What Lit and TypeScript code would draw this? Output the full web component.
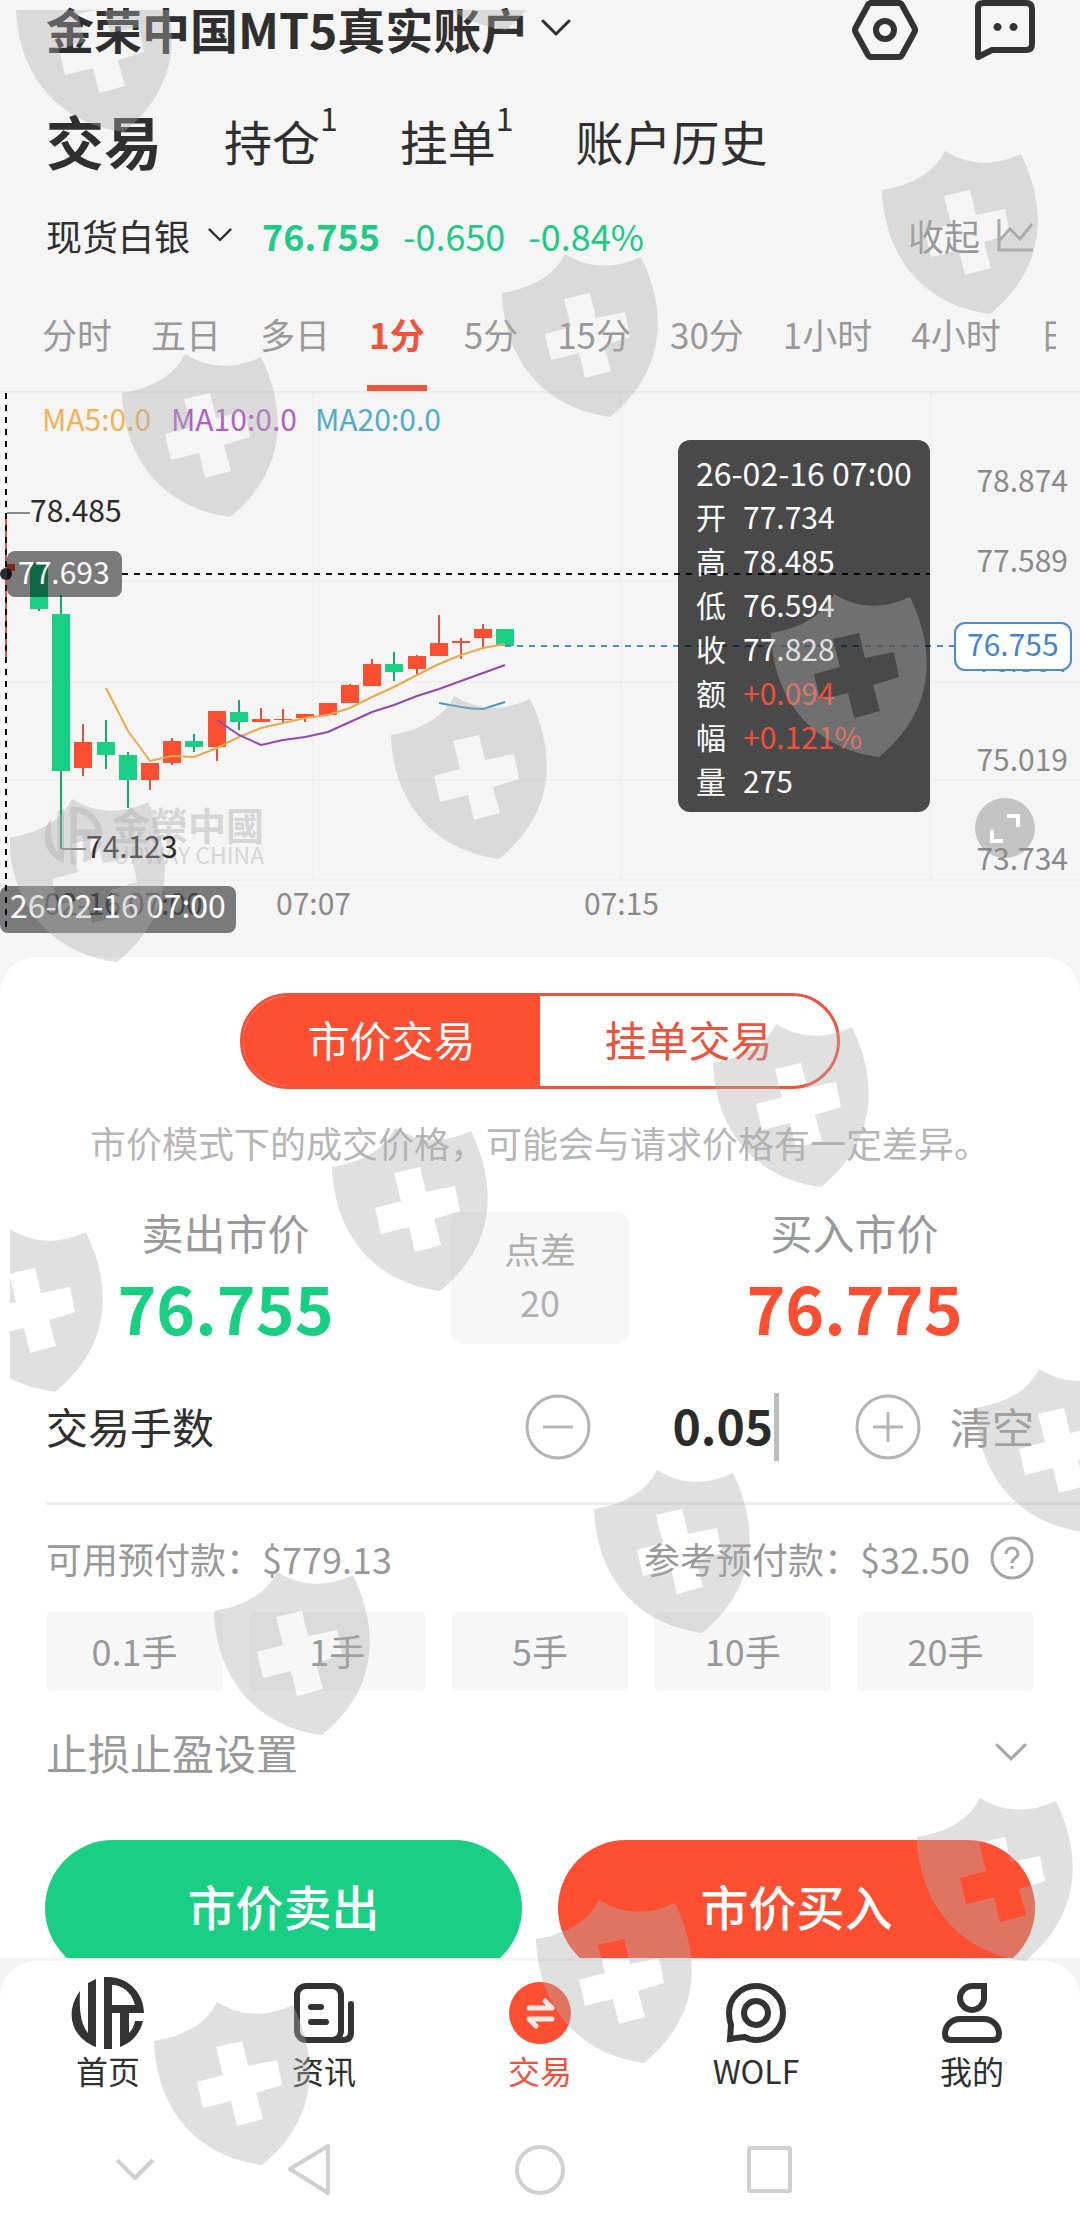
import { LitElement, html, svg, css } from "lit";
import { customElement, state } from "lit/decorators.js";

type Candle = [x: number, up: boolean, top: number, bottom: number, high: number, low: number];

const CANDLES: Candle[] = [
  [39, false, 563, 609, 563, 611],
  [61, false, 614, 771, 595, 849],
  [83, true, 742, 768, 724, 776],
  [106, false, 742, 755, 720, 769],
  [128, false, 755, 780, 752, 808],
  [150, true, 763, 780, 763, 790],
  [172, true, 741, 763, 738, 765],
  [194, false, 741, 747, 734, 752],
  [217, true, 711, 747, 711, 761],
  [239, false, 712, 722, 700, 730],
  [261, true, 719, 722, 708, 722],
  [283, true, 719, 720, 709, 723],
  [305, true, 714, 718, 714, 722],
  [328, true, 703, 715, 703, 715],
  [350, true, 685, 703, 684, 703],
  [372, true, 664, 686, 659, 686],
  [394, false, 664, 672, 652, 681],
  [417, true, 656, 669, 655, 675],
  [439, true, 643, 656, 615, 656],
  [461, true, 641, 643, 638, 659],
  [483, true, 629, 638, 624, 648],
  [505, false, 629, 646, 629, 646],
];

const MA5 =
  "106,688 128,731 150,761 172,756 194,757 217,748 239,737 261,728 283,723 305,718 328,715 350,708 372,697 394,687 417,675 439,664 461,655 483,648 505,644";
const MA10 =
  "217,720 239,735 261,745 283,740 305,737 328,732 350,722 372,712 394,705 417,696 439,689 461,681 483,673 505,665";

const SHIELDS: [number, number][] = [
  [16, -32], [398, -134], [882, 150], [502, 253], [122, 353], [771, 593], [391, 695], [9, 798],
  [713, 1023], [332, 1127], [-53, 1228], [976, 1368], [594, 1469], [214, 1571], [917, 1797],
  [536, 1899], [154, 2001],
];

const SHIELD_PATH =
  "M0 40Q48 32 63 1Q98 23 139 4C167 62 162 120 108 164C40 155 2 105 0 40Z" +
  "M62 46L69 74L43 81L49 107L77 100L83 125L109 118L102 92L128 84L123 59L94 65L88 40Z";

const BRAND_PATH =
  "M14 20C-1 40 4 66 30 76V8L22 12V62C15 54 13 40 14 20Z" +
  "M38 6H42C63 6 78 23 78 42H46V78H38ZM46 14V34H69C66 22 57 14 46 14Z" +
  "M54 41H63V62Q68 57 69 50H77C74 63 65 72 54 76Z";

const PERIODS = ["分时", "五日", "多日", "1分", "5分", "15分", "30分", "1小时", "4小时", "日"];

const OHLC: [string, string, boolean][] = [
  ["开", "77.734", false],
  ["高", "78.485", false],
  ["低", "76.594", false],
  ["收", "77.828", false],
  ["额", "+0.094", true],
  ["幅", "+0.121%", true],
  ["量", "275", false],
];

const chevron = (cls: string) => html`
  <svg class="chev ${cls}" viewBox="0 0 30 18" aria-hidden="true">
    <path d="M2 2L15 15L28 2" fill="none" stroke="currentColor" stroke-width="3" stroke-linecap="round" stroke-linejoin="round" />
  </svg>
`;

@customElement("price-chart")
class PriceChart extends LitElement {
  static styles = css`
    :host {
      display: block;
      position: relative;
      font-family: "Noto Sans CJK SC", sans-serif;
    }
    .plot {
      display: block;
      width: 100%;
      font-size: 30px;
    }
    .grid { stroke: #f0f0f0; stroke-width: 2; fill: none; }
    .edge { stroke: #ebebeb; stroke-width: 3; }
    .up { fill: #ff4f33; stroke: #e0513f; }
    .down { fill: #18cf84; stroke: #16a86e; }
    .wick { stroke-width: 2; }
    .body { stroke: none; }
    .line { fill: none; stroke-width: 2; }
    .axis { fill: #8a8a8a; }
    .mark { fill: #2b2b2b; }
    .tag { fill: rgba(0, 0, 0, 0.5); }
    .tag-text { fill: #fff; }
    .brand { fill: #d6d6d6; }
    .brand-name { font: 700 38px "Noto Sans CJK TC", sans-serif; }
    .brand-sub { font: 400 23px "Noto Sans CJK SC", sans-serif; }
    .tip {
      position: absolute;
      top: 49px;
      right: 150px;
      box-sizing: border-box;
      width: 252px;
      padding: 10px 18px;
      border-radius: 12px;
      background: rgba(0, 0, 0, 0.7);
      color: #fff;
      font-size: 30px;
      line-height: 44px;
      white-space: nowrap;
    }
    .tip-date { font-size: 32px; }
    .tip-list { margin: 0; }
    .tip-row { display: flex; gap: 17px; }
    .tip-value { margin: 0; }
    .rise { color: #f0503c; }
  `;

  render() {
    return html`
      <svg class="plot" viewBox="0 391 1080 566" role="img" aria-label="现货白银 1分">
        <path class="edge" d="M0 392H1080" />
        <path class="grid" d="M0 581H931M0 682H1080M0 780H1080M0 880H1080M313 393V880M621 393V880M931 393V880" />
        <g class="brand">
          <path transform="translate(40 802) scale(0.8)" d=${BRAND_PATH} />
          <text class="brand-name" x="112" y="840">金榮中國</text>
          <text class="brand-sub" x="113" y="864">UPWAY CHINA</text>
        </g>
        <path d="M6 513V662" stroke="#e0513f" stroke-width="2" />
        <rect x="6" y="564" width="9" height="7" fill="#ff4f33" />
        ${CANDLES.map(
          ([x, up, top, bottom, high, low]) => svg`
            <g class=${up ? "up" : "down"}>
              <path class="wick" d="M${x} ${high}V${low}" />
              <rect class="body" x=${x - 9} y=${top} width="18" height=${bottom - top} />
            </g>`
        )}
        <polyline class="line" points=${MA5} stroke="#e8aa4c" />
        <polyline class="line" points=${MA10} stroke="#9546b4" />
        <path class="line" d="M439 703L461 707Q472 709 483 709L505 702" stroke="#3f9cbd" />
        <path d="M505 646H954" stroke="#4a90d0" stroke-width="2" stroke-dasharray="6 6" />
        <g class="axis">
          <text x="42" y="431" fill="#f0b35a">MA5:0.0</text>
          <text x="171" y="431" fill="#ae60c8">MA10:0.0</text>
          <text x="315" y="431" fill="#52acc8">MA20:0.0</text>
          <circle cx="1005" cy="828" r="30" fill="#c4c4c4" />
          <path d="M1007 816H1018V827M992 830V841H1003" fill="none" stroke="#fff" stroke-width="4" />
          <g text-anchor="end">
            <text x="1068" y="492">78.874</text>
            <text x="1068" y="572">77.589</text>
            <text x="1068" y="672">76.304</text>
            <text x="1068" y="771">75.019</text>
            <text x="1068" y="870">73.734</text>
          </g>
          <text x="44" y="915">02-16 07:00</text>
          <text x="276" y="915">07:07</text>
          <text x="584" y="915">07:15</text>
        </g>
        <path d="M7 513H30M62 849H86" stroke="#8a8a8a" stroke-width="2" />
        <text class="mark" x="30" y="522">78.485</text>
        <text class="mark" x="86" y="858">74.123</text>
        <path d="M6 393V930M122 574H930" stroke="#111" stroke-width="2" stroke-dasharray="6 6" fill="none" />
        <circle cx="6" cy="574" r="6" fill="#2b2b33" />
        <rect class="tag" x="7" y="551" width="115" height="46" rx="8" />
        <text class="tag-text" x="18" y="584">77.693</text>
        <rect class="tag" x="0" y="886" width="236" height="47" rx="8" />
        <text class="tag-text" x="10" y="918" font-size="32">26-02-16 07:00</text>
        <rect x="955" y="623" width="116" height="47" rx="10" fill="#fff" stroke="#4a8ccc" stroke-width="2" />
        <text x="967" y="656" fill="#3f84cc">76.755</text>
      </svg>
      <div class="tip">
        <div class="tip-date">26-02-16 07:00</div>
        <dl class="tip-list">
          ${OHLC.map(
            ([name, value, rise]) => html`
              <div class="tip-row">
                <dt>${name}</dt>
                <dd class="tip-value ${rise ? "rise" : ""}">${value}</dd>
              </div>`
          )}
        </dl>
      </div>
    `;
  }
}

@customElement("order-sheet")
class OrderSheet extends LitElement {
  static styles = css`
    :host {
      display: block;
      padding: 36px 46px 0;
      border-radius: 36px 36px 0 0;
      background: #fff;
      color: #999;
      font-size: 36px;
    }
    button, input {
      margin: 0;
      padding: 0;
      border: 0;
      background: none;
      color: inherit;
      font: inherit;
    }
    .modes {
      box-sizing: border-box;
      display: grid;
      grid-template-columns: 1fr 1fr;
      width: 600px;
      max-width: 100%;
      height: 96px;
      margin: 0 auto;
      overflow: hidden;
      border: 3px solid #f0523c;
      border-radius: 48px;
    }
    .mode { padding-bottom: 6px; color: #ee523d; font-size: 42px; }
    .mode.on { background: #ff4f33; color: #fff; }
    .hint {
      margin: 26px 0 43px;
      color: #b6b6b6;
      line-height: 54px;
      text-align: center;
      white-space: nowrap;
    }
    .quotes {
      display: grid;
      grid-template-columns: 1fr 178px 1fr;
      gap: 46px;
      height: 132px;
      text-align: center;
    }
    .side { font-size: 42px; line-height: 40px; }
    .price { font-size: 66px; font-weight: 700; line-height: 68px; margin-top: 20px; }
    .sell { color: #18cf84; }
    .buy { color: #ff4f33; }
    .spread {
      display: flex;
      flex-direction: column;
      justify-content: center;
      border-radius: 12px;
      background: #f7f7f7;
      color: #b0b0b0;
      line-height: 53px;
      padding-bottom: 6px;
    }
    .lots {
      display: flex;
      align-items: center;
      height: 68px;
      margin-top: 49px;
      font-size: 42px;
    }
    .lots-label { flex: 1; padding-bottom: 4px; color: #2f2f2f; }
    .step { display: flex; }
    .step-icon { width: 66px; height: 66px; }
    .field {
      display: flex;
      align-items: center;
      justify-content: center;
      box-sizing: border-box;
      width: 264px;
      padding-left: 6px;
      gap: 2px;
    }
    .amount {
      width: 100px;
      padding-bottom: 6px;
      color: #2b2b2b;
      font-size: 48px;
      font-weight: 700;
      line-height: 62px;
      text-align: right;
      outline: none;
    }
    .caret { width: 5px; height: 68px; background: #bcbcbc; }
    .clear { margin-left: 29px; padding-bottom: 4px; }
    .rule { height: 3px; margin: 41px -46px 0 0; background: #eee; }
    .margins {
      display: flex;
      align-items: center;
      justify-content: space-between;
      margin-top: 26px;
      line-height: 54px;
      white-space: nowrap;
    }
    .need { display: flex; align-items: center; gap: 20px; }
    .help { display: flex; }
    .help-icon { width: 44px; height: 44px; }
    .chips {
      display: grid;
      grid-template-columns: repeat(5, 1fr);
      gap: 26px;
      margin-top: 27px;
    }
    .chip { height: 79px; padding-bottom: 3px; border-radius: 6px; background: #f7f7f7; }
    .stops {
      display: flex;
      align-items: center;
      justify-content: space-between;
      width: 100%;
      margin-top: 31px;
      font-size: 42px;
      line-height: 60px;
    }
    .chev { width: 32px; margin: 2px 7px 0 0; color: #a8a8a8; }
    .actions { display: grid; grid-template-columns: 1fr 1fr; gap: 36px; margin: 58px -1px 0; }
    .action { height: 136px; padding-bottom: 6px; border-radius: 68px; color: #fff; font-size: 48px; font-weight: 500; }
    .action.ask { background: #18cf84; }
    .action.bid { background: #ff4f33; }
  `;

  @state() private lots = "0.05";

  render() {
    return html`
      <div class="modes">
        <button class="mode on">市价交易</button>
        <button class="mode">挂单交易</button>
      </div>
      <p class="hint">市价模式下的成交价格，可能会与请求价格有一定差异。</p>
      <div class="quotes">
        <div>
          <div class="side">卖出市价</div>
          <div class="price sell">76.755</div>
        </div>
        <div class="spread"><span>点差</span><span>20</span></div>
        <div>
          <div class="side">买入市价</div>
          <div class="price buy">76.775</div>
        </div>
      </div>
      <div class="lots">
        <label class="lots-label" for="lots">交易手数</label>
        <button class="step" aria-label="减少">
          <svg class="step-icon" viewBox="0 0 66 66" fill="none" stroke="#b4b4b4" stroke-width="3">
            <circle cx="33" cy="33" r="31" /><path d="M18 33H48" />
          </svg>
        </button>
        <div class="field">
          <input class="amount" id="lots" inputmode="decimal" .value=${this.lots}
            @input=${(e: Event) => (this.lots = (e.target as HTMLInputElement).value)} />
          <span class="caret"></span>
        </div>
        <button class="step" aria-label="增加">
          <svg class="step-icon" viewBox="0 0 66 66" fill="none" stroke="#b4b4b4" stroke-width="3">
            <circle cx="33" cy="33" r="31" /><path d="M18 33H48M33 18V48" />
          </svg>
        </button>
        <button class="clear" @click=${() => (this.lots = "")}>清空</button>
      </div>
      <div class="rule"></div>
      <div class="margins">
        <span>可用预付款：$779.13</span>
        <span class="need">
          参考预付款：$32.50
          <button class="help" aria-label="说明">
            <svg class="help-icon" viewBox="0 0 44 44" fill="none" stroke="#a6a6a6" stroke-width="3">
              <circle cx="22" cy="22" r="20" />
              <path d="M16 18C16 10 28 10 28 18C28 22 22 22 22 27M22 30V33" />
            </svg>
          </button>
        </span>
      </div>
      <div class="chips">
        ${["0.1", "1", "5", "10", "20"].map((n) => html`<button class="chip">${n}手</button>`)}
      </div>
      <button class="stops"><span>止损止盈设置</span>${chevron("")}</button>
      <div class="actions">
        <button class="action ask">市价卖出</button>
        <button class="action bid">市价买入</button>
      </div>
    `;
  }
}

const NAV = [
  {
    label: "首页",
    icon: svg`<path d=${BRAND_PATH} fill="#333" />`,
  },
  {
    label: "资讯",
    icon: svg`<g fill="none" stroke="#333" stroke-width="6" stroke-linecap="round">
      <rect x="15" y="15" width="44" height="54" rx="9" />
      <path d="M69 33V61Q69 69 61 69H52M29 36H39M29 51H44" /></g>`,
  },
  {
    label: "交易",
    icon: svg`<circle cx="42" cy="42" r="31" fill="#ff4f33" />
      <path d="M31 37H54L47 30M54 48H31L38 55" fill="none" stroke="#ffe9e6" stroke-width="5" stroke-linecap="round" stroke-linejoin="round" />`,
  },
  {
    label: "WOLF",
    icon: svg`<g fill="none" stroke="#333" stroke-width="6">
      <path d="M16 68L17 54Q15 48 15 42A27 27 0 1 1 42 69Q36 69 31 66Q28 66 16 68Z" />
      <circle cx="42" cy="42" r="12" /></g>`,
  },
  {
    label: "我的",
    icon: svg`<g fill="none" stroke="#333" stroke-width="6">
      <path d="M42 15H54V27A12 12 0 1 1 42 15Z" />
      <path d="M30 48H54A15 15 0 0 1 69 63Q69 69 63 69H21Q15 69 15 63A15 15 0 0 1 30 48Z" /></g>`,
  },
];

@customElement("app-root")
class AppRoot extends LitElement {
  static styles = css`
    :host {
      position: relative;
      display: flex;
      flex-direction: column;
      height: 100vh;
      overflow: hidden;
      background: #f5f5f5;
      color: #2f2f2f;
      font-family: "Noto Sans CJK SC", sans-serif;
      font-size: 36px;
    }
    button {
      margin: 0;
      padding: 0;
      border: 0;
      background: none;
      color: inherit;
      font: inherit;
      white-space: nowrap;
    }
    a { color: inherit; text-decoration: none; }
    .scroll { flex: 1; min-height: 0; overflow: hidden; }
    .head {
      display: flex;
      align-items: center;
      height: 60px;
      padding: 0 42px 0 46px;
    }
    .account {
      display: flex;
      align-items: center;
      gap: 12px;
      margin-right: auto;
      padding-bottom: 4px;
      font-size: 48px;
      font-weight: 700;
      line-height: 56px;
    }
    .chev { display: block; width: 30px; }
    .chev.small { width: 24px; }
    .head-icon { display: block; width: 66px; height: 60px; }
    .chat { margin-left: 54px; }
    .tabs {
      display: flex;
      align-items: center;
      gap: 62px;
      height: 80px;
      margin-top: 40px;
      padding: 0 46px;
      font-size: 48px;
    }
    .tab { display: flex; }
    .tab.on { font-size: 58px; font-weight: 700; }
    .badge { margin-top: -8px; font-size: 32px; line-height: 40px; }
    .symbol {
      display: flex;
      align-items: center;
      height: 54px;
      margin-top: 28px;
      padding: 0 46px;
      line-height: 54px;
    }
    .name { display: flex; align-items: center; gap: 18px; margin-right: 30px; }
    .figures { display: flex; gap: 23px; color: #20c986; }
    .last { font-weight: 700; }
    .fold { display: flex; align-items: center; gap: 16px; margin-left: auto; color: #999; }
    .fold-icon { width: 38px; height: 36px; }
    .periods {
      display: flex;
      gap: 39px;
      height: 84px;
      margin: 45px 24px 0 0;
      padding-left: 42px;
      overflow: hidden;
      color: #999;
      font-size: 35px;
      line-height: 54px;
    }
    .period { position: relative; flex: none; display: flex; }
    .period.on { color: #f0523c; font-weight: 700; }
    .period.on::after {
      content: "";
      position: absolute;
      left: 50%;
      bottom: 0;
      width: 60px;
      height: 6px;
      margin-left: -30px;
      background: #f0523c;
    }
    .foot { background: #f3f3f3; padding-top: 3px; }
    .foot-panel { border-radius: 36px 36px 0 0; background: #fff; }
    .nav { display: grid; grid-template-columns: repeat(5, 1fr); padding-top: 10px; }
    .nav-item {
      display: flex;
      flex-direction: column;
      align-items: center;
      font-size: 32px;
      line-height: 30px;
    }
    .nav-item.on { color: #ee523d; }
    .nav-icon { width: 84px; height: 84px; }
    .system { display: block; width: 100%; height: 144px; }
    .marks { position: absolute; inset: 10px 0 0 10px; overflow: hidden; pointer-events: none; }
    .marks-art { display: block; fill: #b0b0b0; fill-opacity: 0.39; }
  `;

  @state() private period = "1分";

  render() {
    return html`
      <main class="scroll">
        <header class="head">
          <button class="account">金荣中国MT5真实账户${chevron("")}</button>
          <button aria-label="设置">
            <svg class="head-icon" viewBox="0 0 66 60" fill="none" stroke="#333" stroke-width="6" stroke-linejoin="round">
              <path d="M19 3H47Q49 3 50 5L62 27Q64 30 62 33L50 55Q49 57 47 57H19Q17 57 16 55L4 33Q2 30 4 27L16 5Q17 3 19 3Z" />
              <circle cx="33" cy="30" r="9" />
            </svg>
          </button>
          <button class="chat" aria-label="消息">
            <svg class="head-icon" viewBox="0 0 66 60" fill="none" stroke="#333" stroke-width="6" stroke-linejoin="round">
              <path d="M10 3H54Q60 3 60 9V44Q60 50 54 50H20L6 57V8Q6 3 11 3" />
              <path d="M25 23a4 4 0 1 0 1 0M41 23a4 4 0 1 0 1 0" fill="#333" stroke="none" />
            </svg>
          </button>
        </header>
        <nav class="tabs">
          <button class="tab on">交易</button>
          <button class="tab">持仓<span class="badge">1</span></button>
          <button class="tab">挂单<span class="badge">1</span></button>
          <button class="tab">账户历史</button>
        </nav>
        <div class="symbol">
          <button class="name">现货白银${chevron("small")}</button>
          <div class="figures">
            <span class="last">76.755</span><span>-0.650</span><span>-0.84%</span>
          </div>
          <button class="fold">
            收起
            <svg class="fold-icon" viewBox="0 0 38 36" fill="none" stroke="#aaa" stroke-width="3">
              <path d="M3 2V33H37M3 24L14 12L24 22L36 7" />
            </svg>
          </button>
        </div>
        <div class="periods">
          ${PERIODS.map(
            (p) => html`
              <button class="period ${p === this.period ? "on" : ""}" @click=${() => (this.period = p)}>${p}</button>`
          )}
        </div>
        <price-chart></price-chart>
        <order-sheet></order-sheet>
      </main>
      <footer class="foot">
        <div class="foot-panel">
          <nav class="nav">
            ${NAV.map(
              ({ label, icon }) => html`
                <a class="nav-item ${label === "交易" ? "on" : ""}" href="#">
                  <svg class="nav-icon" viewBox="0 0 84 84" aria-hidden="true">${icon}</svg>
                  ${label}
                </a>`
            )}
          </nav>
          <svg class="system" viewBox="0 0 1080 144" fill="none" stroke="#d0d0d0" stroke-width="4" stroke-linejoin="round" aria-hidden="true">
            <path d="M117 75L135 93L153 75" />
            <path d="M328 61V108L290 84Z" />
            <circle cx="540" cy="85" r="23" />
            <rect x="749" y="63" width="41" height="43" rx="1" />
          </svg>
        </div>
      </footer>
      <div class="marks" aria-hidden="true">
        <svg class="marks-art" width="1070" height="2219" viewBox="10 10 1070 2219">
          ${SHIELDS.map(([x, y]) => svg`<path transform="translate(${x} ${y})" fill-rule="evenodd" d=${SHIELD_PATH} />`)}
        </svg>
      </div>
    `;
  }
}
